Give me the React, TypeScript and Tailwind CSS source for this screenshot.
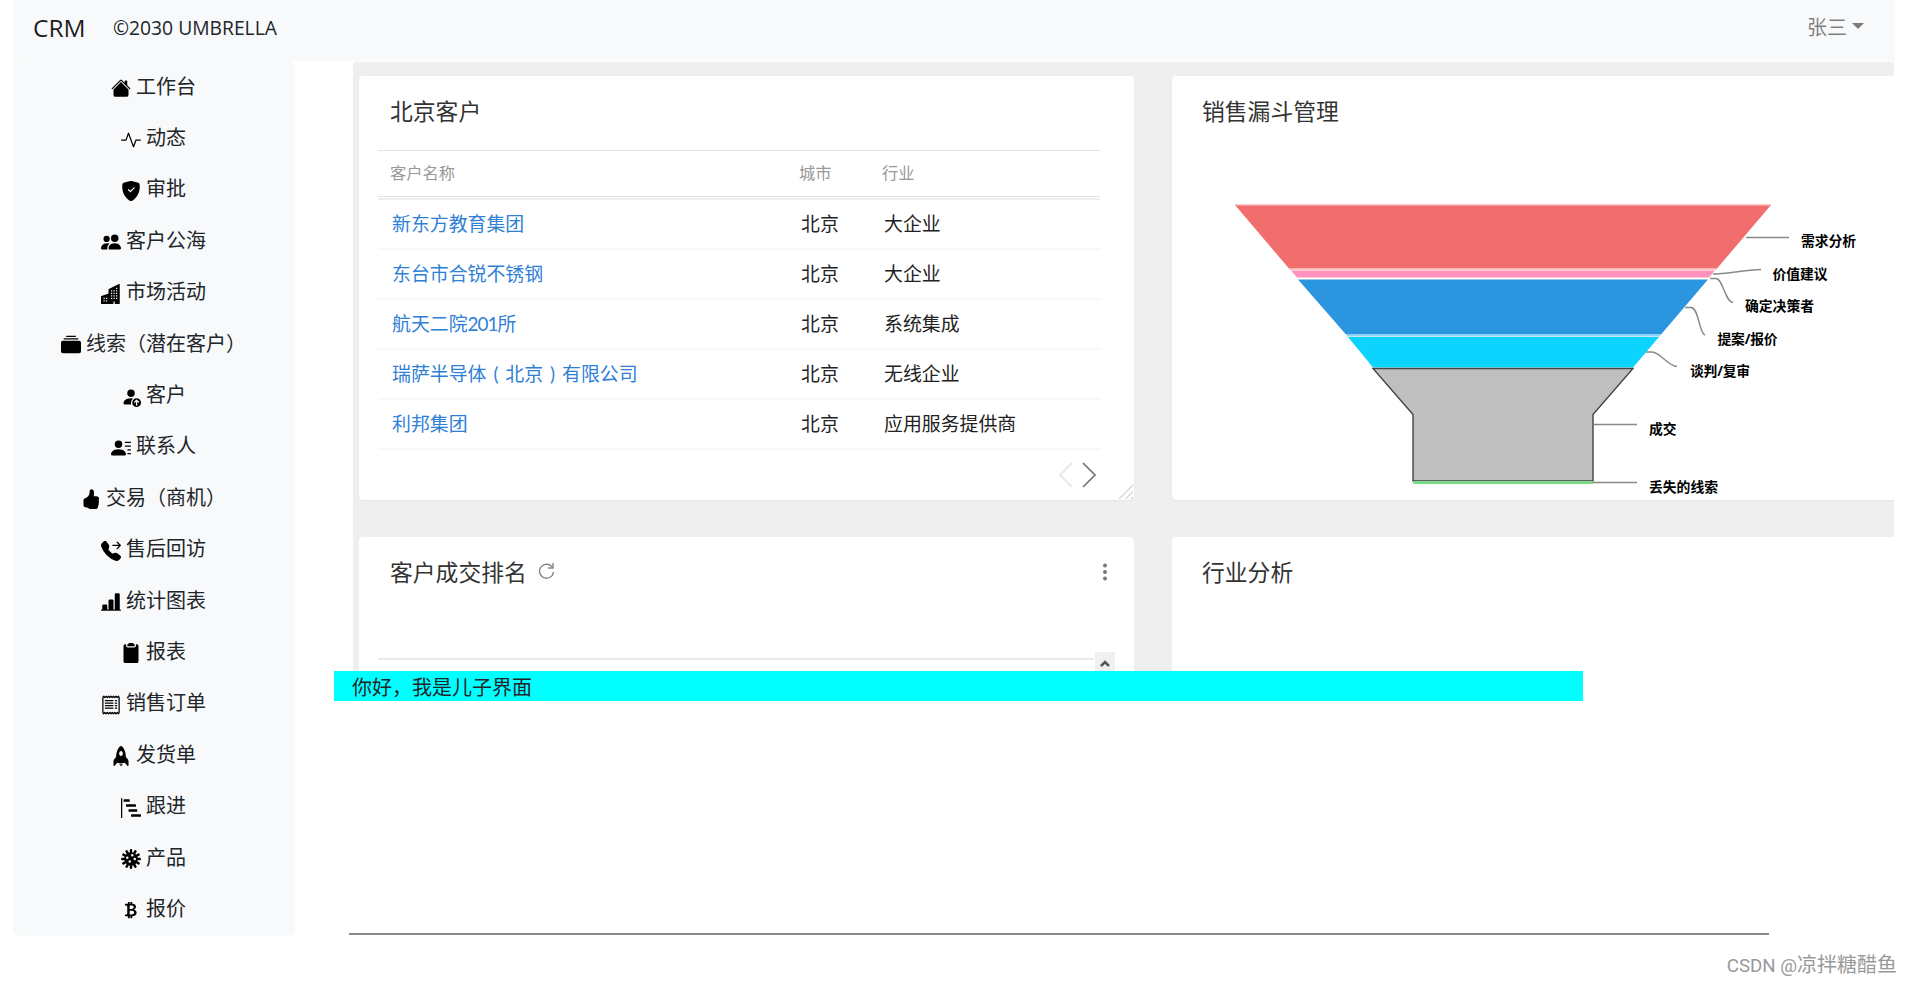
import type { ReactNode } from "react";
import type { IconType } from "react-icons";
import {
  BsActivity,
  BsBarChartLineFill,
  BsBarChartSteps,
  BsBuildingsFill,
  BsClipboard2Fill,
  BsCollectionFill,
  BsCurrencyBitcoin,
  BsHandThumbsUpFill,
  BsHouseFill,
  BsPeopleFill,
  BsPersonFillUp,
  BsPersonLinesFill,
  BsReceipt,
  BsRocketFill,
  BsShieldFillCheck,
  BsTelephoneForwardFill,
  BsVirus,
} from "react-icons/bs";

const menu: { label: string; icon: IconType }[] = [
  { label: "工作台", icon: BsHouseFill },
  { label: "动态", icon: BsActivity },
  { label: "审批", icon: BsShieldFillCheck },
  { label: "客户公海", icon: BsPeopleFill },
  { label: "市场活动", icon: BsBuildingsFill },
  { label: "线索（潜在客户）", icon: BsCollectionFill },
  { label: "客户", icon: BsPersonFillUp },
  { label: "联系人", icon: BsPersonLinesFill },
  { label: "交易（商机）", icon: BsHandThumbsUpFill },
  { label: "售后回访", icon: BsTelephoneForwardFill },
  { label: "统计图表", icon: BsBarChartLineFill },
  { label: "报表", icon: BsClipboard2Fill },
  { label: "销售订单", icon: BsReceipt },
  { label: "发货单", icon: BsRocketFill },
  { label: "跟进", icon: BsBarChartSteps },
  { label: "产品", icon: BsVirus },
  { label: "报价", icon: BsCurrencyBitcoin },
];

// bracket centred in a full-width box
function Bracket({ children }: { children: ReactNode }) {
  return <span className="inline-block w-[1em] text-center">{children}</span>;
}

const customers: { name: ReactNode; city: string; industry: string }[] = [
  { name: "新东方教育集团", city: "北京", industry: "大企业" },
  { name: "东台市合锐不锈钢", city: "北京", industry: "大企业" },
  {
    name: (
      <>
        航天二院<span className="tracking-[-1px]">201</span>所
      </>
    ),
    city: "北京",
    industry: "系统集成",
  },
  {
    name: (
      <>
        瑞萨半导体<Bracket>(</Bracket>北京<Bracket>)</Bracket>有限公司
      </>
    ),
    city: "北京",
    industry: "无线企业",
  },
  { name: "利邦集团", city: "北京", industry: "应用服务提供商" },
];

const funnelLabels = [
  { text: "需求分析", x: 601, y: 56, width: 55 },
  { text: "价值建议", x: 572.5, y: 88.5, width: 55 },
  { text: "确定决策者", x: 545, y: 121, width: 69 },
  { text: "提案/报价", x: 517.5, y: 153.5, width: 60 },
  { text: "谈判/复审", x: 490, y: 186, width: 60 },
  { text: "成交", x: 449, y: 244, width: 27.5 },
  { text: "丢失的线索", x: 449, y: 302, width: 69 },
];

function Header() {
  return (
    <header className="flex h-[61px] items-center bg-[#f8f9fa] pr-[31px] pb-[5px] pl-5 text-[#212529]">
      <span className="w-20 text-[24.5px] leading-none text-black/90">CRM</span>
      <span className="text-[19.3px]">©2030 UMBRELLA</span>
      <button className="ml-auto flex items-center gap-[5px] text-black/50">
        <span className="text-[20px] leading-none">张三</span>
        <span className="mb-1 border-x-[6px] border-t-[6px] border-x-transparent border-t-black/50" />
      </button>
    </header>
  );
}

function Sidebar() {
  return (
    <nav className="h-[875px] w-[282px] rounded-md bg-[#f8f9fa]">
      <ul>
        {menu.map(({ label, icon: Icon }) => (
          <li
            key={label}
            className="flex h-[51.4px] items-center justify-center gap-[5px] pr-px text-[20px] whitespace-nowrap text-[#212529]"
          >
            <Icon className="mt-[3px] size-5 text-black" />
            {label}
          </li>
        ))}
      </ul>
    </nav>
  );
}

function CustomersCard() {
  return (
    <section className="relative h-[424px] rounded bg-white pr-[34px] pl-[19px] shadow-xs">
      <h2 className="flex h-[74px] items-center pb-0.5 pl-3 text-[22.8px] text-[#333]">
        北京客户
      </h2>
      <div className="grid h-[47px] grid-cols-[409px_83px_1fr] items-center border-y border-[#e2e2e2] pl-3 text-[16.3px] text-[#999]">
        <span>客户名称</span>
        <span>城市</span>
        <span>行业</span>
      </div>
      <div className="mt-px h-0.5 bg-[#eee]" />
      {customers.map((c, i) => (
        <div
          key={i}
          className="grid h-[50px] grid-cols-[409px_83px_1fr] items-center border-b-2 border-[#f8f8f8] pl-3.5 text-[18.9px] text-[#222]"
        >
          <span className="font-[Lato,'Noto_Sans_CJK_SC',sans-serif] text-[#2f7fd6]">
            {c.name}
          </span>
          <span>{c.city}</span>
          <span>{c.industry}</span>
        </div>
      ))}
      <div className="mt-3 flex justify-end gap-[9px] pr-1">
        <svg className="h-[26px] w-[14px]" viewBox="0 0 14 26" fill="none" stroke="#e2e2e2" strokeWidth="1.5">
          <path d="M13 1 1 13l12 12" />
        </svg>
        <svg className="h-[26px] w-[14px]" viewBox="0 0 14 26" fill="none" stroke="#777" strokeWidth="1.7">
          <path d="m1 1 12 12L1 25" />
        </svg>
      </div>
      <svg className="absolute right-0 bottom-0 h-4 w-4" viewBox="0 0 16 16" stroke="#d5d5d5" strokeWidth="1.3">
        <path d="M1 15 15 1M7.500 15 15 7.500M13 15l2-2" />
      </svg>
    </section>
  );
}

function FunnelCard() {
  return (
    <section className="h-[424px] rounded-l bg-white shadow-xs">
      <h2 className="flex h-[74px] items-center pb-0.5 pl-[30px] text-[22.8px] text-[#333]">
        销售漏斗管理
      </h2>
      {/* user units are pixels, origin is 28px right of the card edge */}
      <svg className="mt-[35px] ml-7 h-[315px] w-[690px]" viewBox="0 0 690 315">
        <path d="M35 20H571L517 83.500H89Z" fill="#f26d6d" />
        <path d="M35 20H571M89 84H517" stroke="#f9b4b4" strokeWidth="1.5" />
        <path d="M91 85.500H515L509 92.500H97Z" fill="#ff91bd" />
        <path d="M98 94.500H508L461 149.500H146Z" fill="#2c95df" />
        <path d="M147 150.500H460" stroke="#8dd4f5" strokeWidth="2" />
        <path d="M148 152H459L433 182.500H173Z" fill="#0cd4ff" />
        <path d="M173 183.500H433L393 229.500V296H213V229.500Z" fill="#bfbfbf" stroke="#444" strokeWidth="1.4" />
        <path d="M213 297.500H393" stroke="#7ddb87" strokeWidth="3" />
        <g fill="none" stroke="#888" strokeWidth="1.4">
          <path d="M546 52.500H589" />
          <path d="M513 89C526 89 544 85 561 84.500" />
          <path d="M510 93.500H516C523 93.500 525 117 533 117.500" />
          <path d="M485 122.500H491C499 122.500 499 149 505 150" />
          <path d="M446 167H452C460 167 468 181 477 181.500" />
          <path d="M394 239.500H437" />
          <path d="M393 297.500H437" />
        </g>
        {funnelLabels.map((l) => (
          <text
            key={l.text}
            x={l.x}
            y={l.y + 5}
            textLength={l.width}
            className="fill-black text-[13.8px] font-bold"
          >
            {l.text}
          </text>
        ))}
      </svg>
    </section>
  );
}

function RankingCard() {
  return (
    <section className="h-[134px] rounded-t bg-white pl-[19px]">
      <div className="flex h-[72px] items-center pr-[27px] pl-3">
        <h2 className="text-[22.8px] text-[#333]">客户成交排名</h2>
        <svg className="mb-1 ml-[11px] h-[18px] w-[17px]" viewBox="0 0 17 18" fill="none" stroke="#888" strokeWidth="1.4">
          <path d="M14.500 5.500A7 7 0 1 0 15.500 10M15 1v5h-5" />
        </svg>
        <svg className="mb-0.5 ml-auto h-[18px] w-1" viewBox="0 0 4 18" fill="#777">
          <circle cx="2" cy="2.500" r="2" />
          <circle cx="2" cy="9" r="2" />
          <circle cx="2" cy="15.500" r="2" />
        </svg>
      </div>
      <div className="mt-[43px] flex pr-[19px]">
        <div className="mt-1.5 mr-px h-0.5 flex-1 bg-[#e9e9e9]" />
        <div className="flex h-[19px] w-5 items-center justify-center bg-[#f0f0f0]">
          <svg className="mt-1 h-[9px] w-[10px]" viewBox="0 0 10 9" fill="none" stroke="#555" strokeWidth="2.5">
            <path d="m1 7 4-4 4 4" />
          </svg>
        </div>
      </div>
    </section>
  );
}

function Dashboard() {
  return (
    <div className="ml-[19px] grid h-[609px] w-[1541px] grid-cols-[775px_723px] grid-rows-[424px_134px] gap-x-[38px] gap-y-[37px] overflow-hidden bg-[#efefef] pt-3.5 pl-1.5">
      <CustomersCard />
      <FunnelCard />
      <RankingCard />
      <section className="rounded-tl bg-white">
        <h2 className="flex h-[72px] items-center pl-[30px] text-[22.8px] text-[#333]">
          行业分析
        </h2>
      </section>
    </div>
  );
}

export default function App() {
  return (
    <div className="h-[984px] overflow-hidden bg-white pr-[18px] pl-[13px] font-['Open_Sans','Noto_Sans_CJK_SC',sans-serif]">
      <Header />
      <div className="flex">
        <Sidebar />
        <main className="min-w-0 flex-1 pt-px pl-[39px]">
          <Dashboard />
          <div className="flex h-[30px] w-[1249px] items-center bg-[#00ffff] pt-[3px] pl-[18px] text-[20px] text-[#212529]">
            你好，我是儿子界面
          </div>
          <hr className="mt-[232px] ml-[15px] w-[1420px] border-0 border-t-2 border-[#888]" />
        </main>
      </div>
      <footer className="mt-[14px] -mr-0.5 text-right font-[Roboto,'Noto_Sans_CJK_SC',sans-serif] text-[20px] leading-[30px] text-[#999]">
        <span className="text-[18.7px]">CSDN @</span>凉拌糖醋鱼
      </footer>
    </div>
  );
}
